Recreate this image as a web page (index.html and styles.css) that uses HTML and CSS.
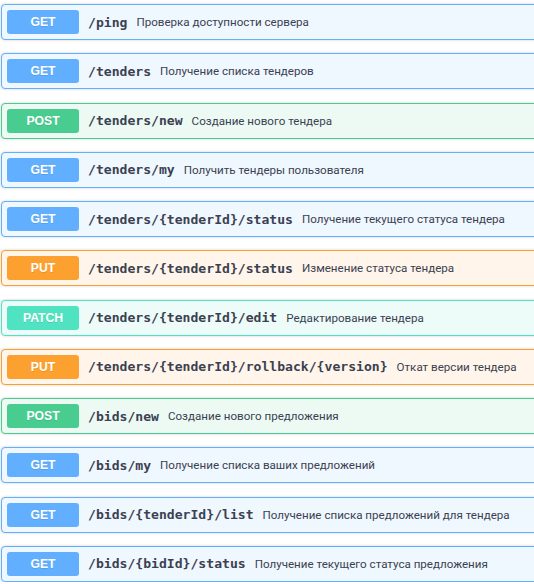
FILE: index.html
```html
<!DOCTYPE html>
<html lang="ru">
<head>
<meta charset="utf-8">
<link rel="stylesheet" href="styles.css">
</head>
<body>
<div class="ops">
  <div class="op get"><span class="method">GET</span><span class="path">/ping</span><span class="desc">Проверка доступности сервера</span></div>
  <div class="op get"><span class="method">GET</span><span class="path">/tenders</span><span class="desc">Получение списка тендеров</span></div>
  <div class="op post"><span class="method">POST</span><span class="path">/tenders/new</span><span class="desc">Создание нового тендера</span></div>
  <div class="op get"><span class="method">GET</span><span class="path">/tenders/my</span><span class="desc">Получить тендеры пользователя</span></div>
  <div class="op get"><span class="method">GET</span><span class="path">/tenders/{tenderId}/status</span><span class="desc">Получение текущего статуса тендера</span></div>
  <div class="op put"><span class="method">PUT</span><span class="path">/tenders/{tenderId}/status</span><span class="desc">Изменение статуса тендера</span></div>
  <div class="op patch"><span class="method">PATCH</span><span class="path">/tenders/{tenderId}/edit</span><span class="desc">Редактирование тендера</span></div>
  <div class="op put"><span class="method">PUT</span><span class="path">/tenders/{tenderId}/rollback/{version}</span><span class="desc">Откат версии тендера</span></div>
  <div class="op post"><span class="method">POST</span><span class="path">/bids/new</span><span class="desc">Создание нового предложения</span></div>
  <div class="op get"><span class="method">GET</span><span class="path">/bids/my</span><span class="desc">Получение списка ваших предложений</span></div>
  <div class="op get"><span class="method">GET</span><span class="path">/bids/{tenderId}/list</span><span class="desc">Получение списка предложений для тендера</span></div>
  <div class="op get"><span class="method">GET</span><span class="path">/bids/{bidId}/status</span><span class="desc">Получение текущего статуса предложения</span></div>
</div>
</body>
</html>
```

FILE: styles.css
```css
html, body {
  margin: 0;
  padding: 0;
  overflow: hidden;
  background: #fff;
}
.ops {
  width: 600px;
  padding: 4px 0 0 1px;
  display: flex;
  flex-direction: column;
  gap: 13.27px;
}
.op {
  display: flex;
  align-items: center;
  height: 36px;
  box-sizing: border-box;
  padding: 0 5px;
  border: 1px solid #61affe;
  border-radius: 4px;
  box-shadow: 0 0 3px rgba(0,0,0,.19);
  color: #3b4151;
}
.method {
  flex: none;
  width: 72px;
  height: 24px;
  border-radius: 3px;
  color: #fff;
  font: bold 12.2px/24px "Liberation Sans", Arial, sans-serif;
  text-align: center;
  text-shadow: 0 1px 0 rgba(0,0,0,.1);
}
.path {
  padding: 0 9px;
  font: 600 13.1px "DejaVu Sans Mono", monospace;
  color: #3b4151;
  white-space: nowrap;
}
.desc {
  font: 11.6px Roboto, "Liberation Sans", sans-serif;
  color: #3b4151;
  white-space: nowrap;
}
.get { background: #eff7ff; border-color: #61affe; }
.get .method { background: #61affe; }
.post { background: #edfaf4; border-color: #49cc90; }
.post .method { background: #49cc90; }
.put { background: #fff5ea; border-color: #fca130; }
.put .method { background: #fca130; }
.patch { background: #edfcf9; border-color: #50e3c2; }
.patch .method { background: #50e3c2; }
```
